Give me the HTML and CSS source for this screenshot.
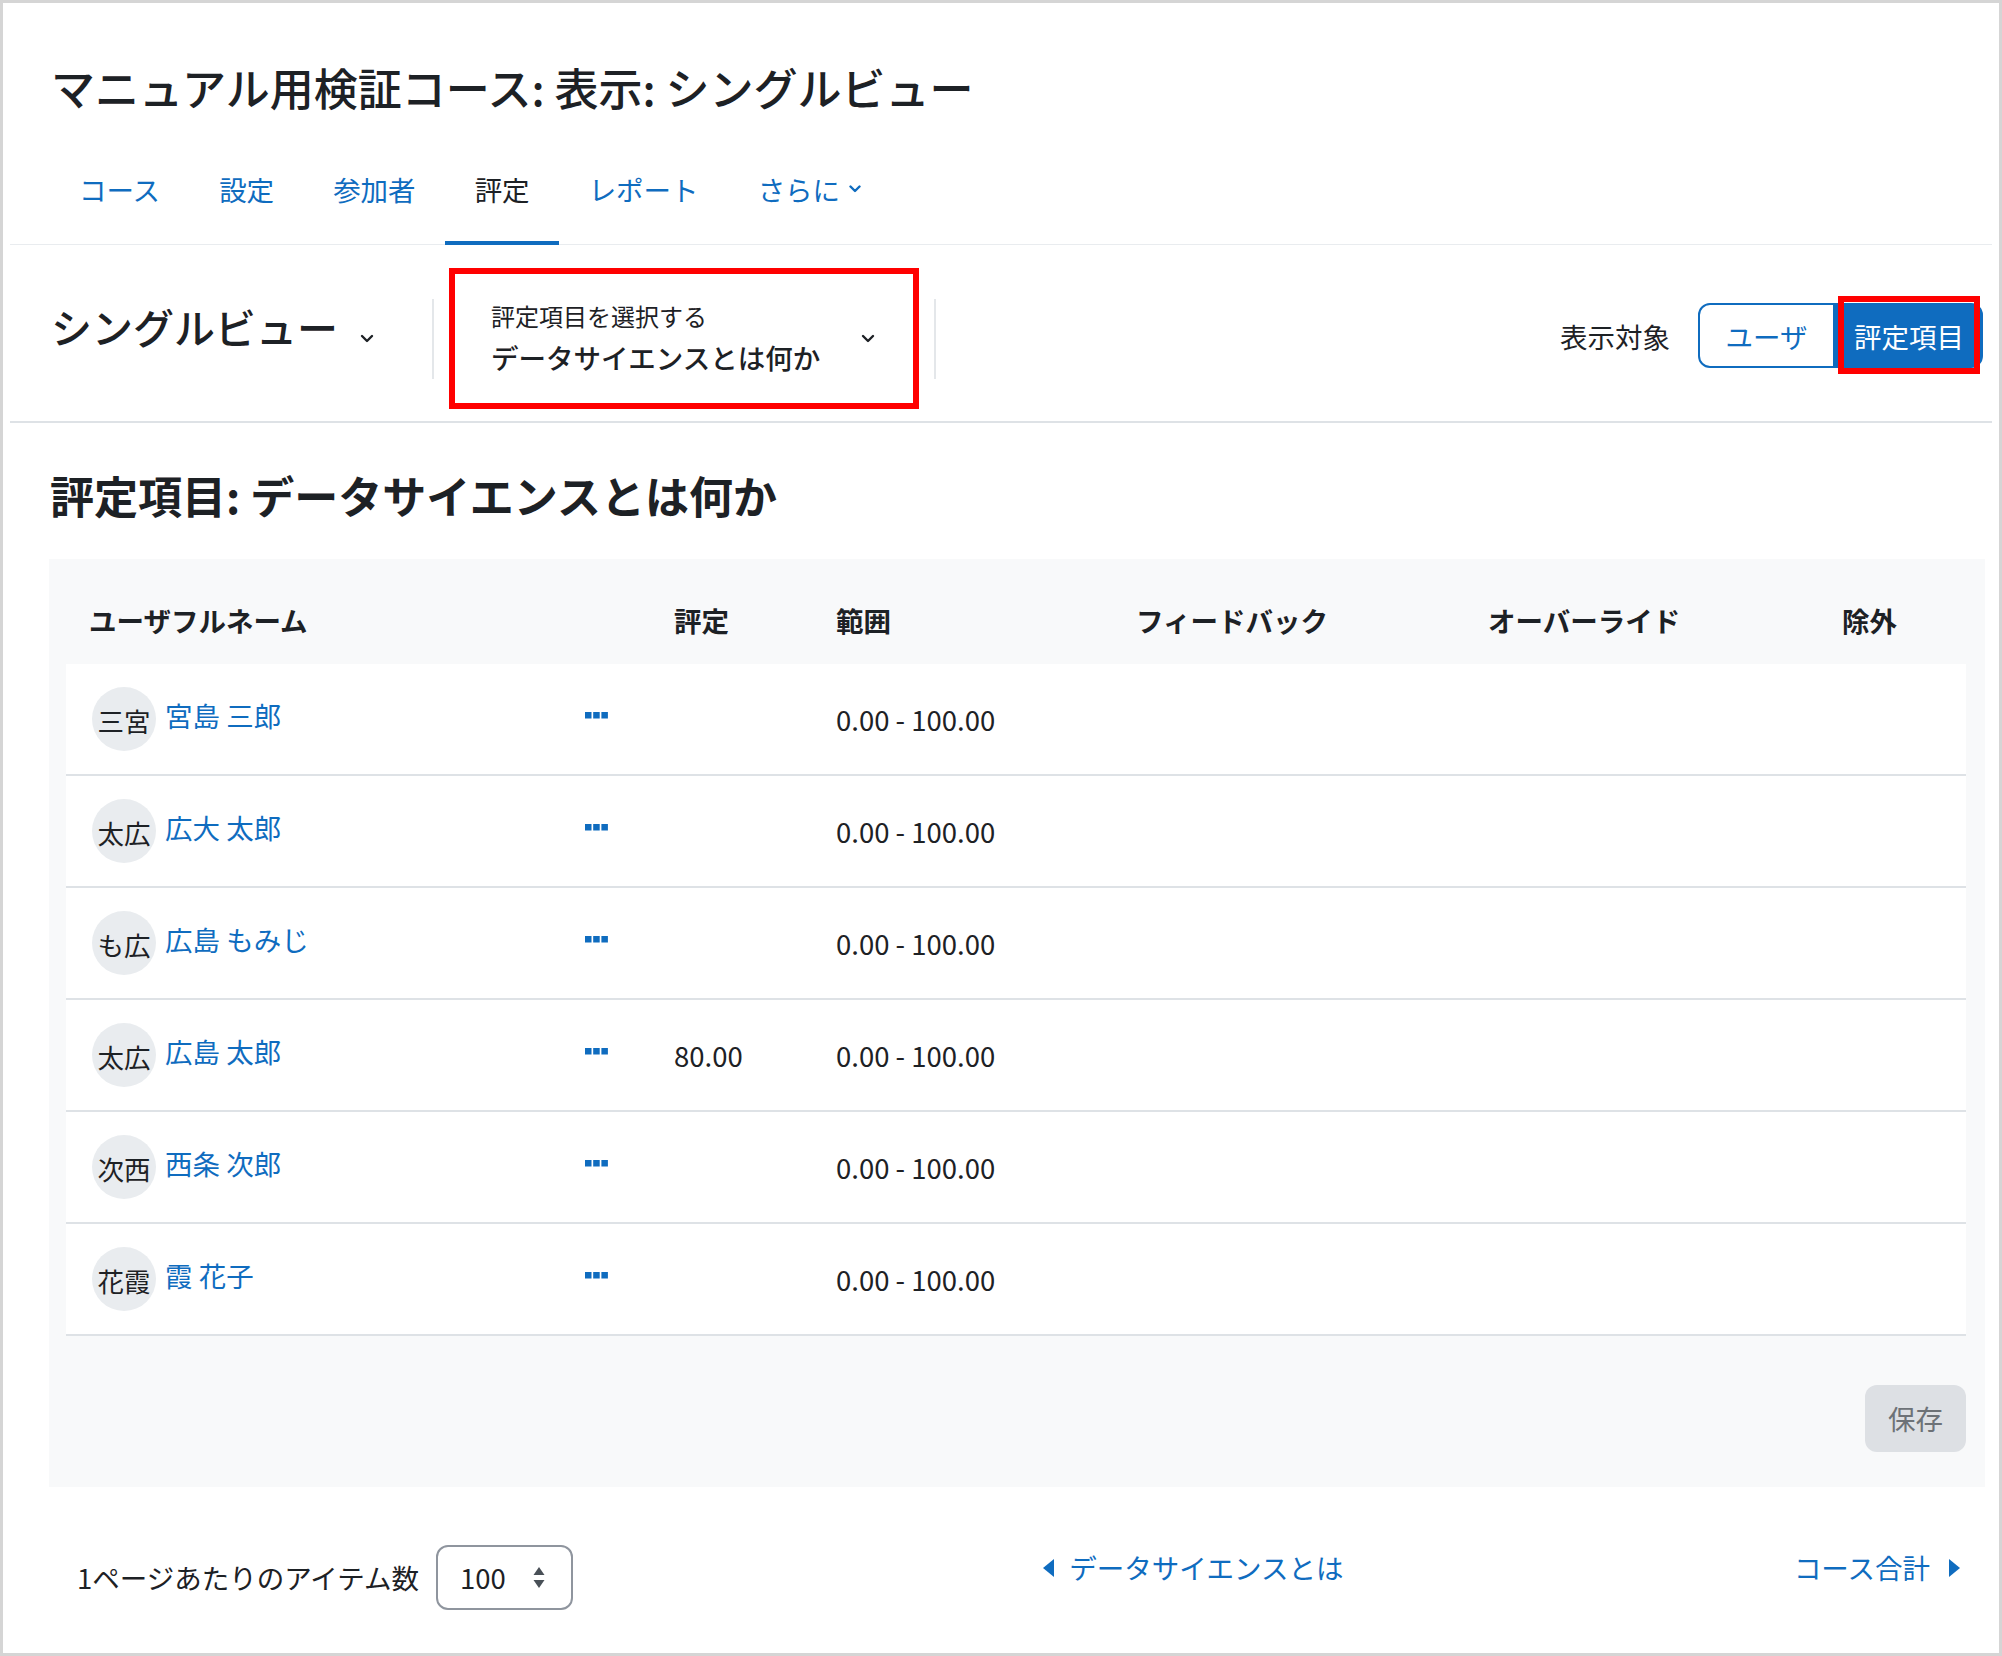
FILE: index.html
```html
<!DOCTYPE html>
<html lang="ja">
<head>
<meta charset="utf-8">
<title>シングルビュー</title>
<link rel="stylesheet" href="styles.css">
</head>
<body>
<div class="frame">
  <header class="page-header">
    <h1 class="page-title">マニュアル用検証コース: 表示: シングルビュー</h1>
  </header>

  <nav class="secondary-nav">
    <ul class="tabs">
      <li class="tab"><a href="#">コース</a></li>
      <li class="tab"><a href="#">設定</a></li>
      <li class="tab"><a href="#">参加者</a></li>
      <li class="tab active"><a href="#">評定</a></li>
      <li class="tab"><a href="#">レポート</a></li>
      <li class="tab"><a href="#">さらに<svg class="chev-tab" viewBox="0 0 12 8"><polyline points="1.5,1.5 6,6 10.5,1.5"/></svg></a></li>
    </ul>
  </nav>

  <div class="tertiary">
    <div class="view-select">
      <h2 class="view-title">シングルビュー</h2>
      <svg class="chev" viewBox="0 0 14 9"><polyline points="2,2 7,7 12,2"/></svg>
    </div>
    <span class="vsep"></span>
    <div class="item-select">
      <div class="item-text">
        <div class="item-label">評定項目を選択する</div>
        <div class="item-value">データサイエンスとは何か</div>
      </div>
      <svg class="chev" viewBox="0 0 14 9"><polyline points="2,2 7,7 12,2"/></svg>
    </div>
    <span class="vsep"></span>
    <div class="spacer"></div>
    <div class="view-toggle">
      <span class="toggle-label">表示対象</span>
      <div class="btn-group">
        <button class="btn btn-outline">ユーザ</button>
        <button class="btn btn-primary">評定項目<span class="annot"></span></button>
      </div>
    </div>
  </div>

  <main class="content">
    <h3 class="item-heading">評定項目: データサイエンスとは何か</h3>

    <section class="panel">
      <div class="grade-table">
        <div class="trow thead">
          <div>ユーザフルネーム</div>
          <div></div>
          <div>評定</div>
          <div>範囲</div>
          <div>フィードバック</div>
          <div>オーバーライド</div>
          <div>除外</div>
        </div>
        <div class="tbody">
          <div class="trow">
            <div class="user"><span class="avatar">三宮</span><a class="uname" href="#">宮島 三郎</a></div>
            <div><svg class="dots" viewBox="0 0 23 7"><rect x="0" y="0" width="6.5" height="6.5"/><rect x="8.2" y="0" width="6.5" height="6.5"/><rect x="16.4" y="0" width="6.5" height="6.5"/></svg></div>
            <div></div>
            <div>0.00 - 100.00</div>
            <div></div><div></div><div></div>
          </div>
          <div class="trow">
            <div class="user"><span class="avatar">太広</span><a class="uname" href="#">広大 太郎</a></div>
            <div><svg class="dots" viewBox="0 0 23 7"><rect x="0" y="0" width="6.5" height="6.5"/><rect x="8.2" y="0" width="6.5" height="6.5"/><rect x="16.4" y="0" width="6.5" height="6.5"/></svg></div>
            <div></div>
            <div>0.00 - 100.00</div>
            <div></div><div></div><div></div>
          </div>
          <div class="trow">
            <div class="user"><span class="avatar">も広</span><a class="uname" href="#">広島 もみじ</a></div>
            <div><svg class="dots" viewBox="0 0 23 7"><rect x="0" y="0" width="6.5" height="6.5"/><rect x="8.2" y="0" width="6.5" height="6.5"/><rect x="16.4" y="0" width="6.5" height="6.5"/></svg></div>
            <div></div>
            <div>0.00 - 100.00</div>
            <div></div><div></div><div></div>
          </div>
          <div class="trow">
            <div class="user"><span class="avatar">太広</span><a class="uname" href="#">広島 太郎</a></div>
            <div><svg class="dots" viewBox="0 0 23 7"><rect x="0" y="0" width="6.5" height="6.5"/><rect x="8.2" y="0" width="6.5" height="6.5"/><rect x="16.4" y="0" width="6.5" height="6.5"/></svg></div>
            <div>80.00</div>
            <div>0.00 - 100.00</div>
            <div></div><div></div><div></div>
          </div>
          <div class="trow">
            <div class="user"><span class="avatar">次西</span><a class="uname" href="#">西条 次郎</a></div>
            <div><svg class="dots" viewBox="0 0 23 7"><rect x="0" y="0" width="6.5" height="6.5"/><rect x="8.2" y="0" width="6.5" height="6.5"/><rect x="16.4" y="0" width="6.5" height="6.5"/></svg></div>
            <div></div>
            <div>0.00 - 100.00</div>
            <div></div><div></div><div></div>
          </div>
          <div class="trow">
            <div class="user"><span class="avatar">花霞</span><a class="uname" href="#">霞 花子</a></div>
            <div><svg class="dots" viewBox="0 0 23 7"><rect x="0" y="0" width="6.5" height="6.5"/><rect x="8.2" y="0" width="6.5" height="6.5"/><rect x="16.4" y="0" width="6.5" height="6.5"/></svg></div>
            <div></div>
            <div>0.00 - 100.00</div>
            <div></div><div></div><div></div>
          </div>
        </div>
      </div>
      <div class="panel-actions">
        <button class="btn-save" disabled>保存</button>
      </div>
    </section>

    <footer class="pager">
      <div class="perpage">
        <span>1ページあたりのアイテム数</span>
        <div class="select">
          <span>100</span>
          <svg class="updown" viewBox="0 0 12 22"><polygon points="6,0 11.5,8 0.5,8"/><polygon points="0.5,13 11.5,13 6,21"/></svg>
        </div>
      </div>
      <a class="pager-link prev" href="#"><svg class="tri" viewBox="0 0 11 18"><polygon points="11,0 0,9 11,18"/></svg><span>データサイエンスとは</span></a>
      <a class="pager-link next" href="#"><span>コース合計</span><svg class="tri" viewBox="0 0 11 18"><polygon points="0,0 11,9 0,18"/></svg></a>
    </footer>
  </main>
</div>
</body>
</html>
```

FILE: styles.css
```css
* {
  box-sizing: border-box;
  margin: 0;
  padding: 0;
}

html, body {
  background: #ffffff;
}

body {
  margin: 0;
  font-family: "Noto Sans CJK JP", "Noto Sans", sans-serif;
  font-size: 27.5px;
  line-height: 1.4;
  color: #1d2125;
}

a {
  color: #0f6cbf;
  text-decoration: none;
}

.frame {
  width: 2002px;
  height: 1656px;
  border: 3px solid #d5d5d5;
  padding: 0 7px;
  overflow: hidden;
}

/* Header */
.page-header {
  padding: 57px 0 0 41px;
}

.page-title {
  font-size: 44px;
  font-weight: 500;
  line-height: 54px;
}

/* Secondary navigation */
.secondary-nav {
  margin-top: 39px;
  border-bottom: 1px solid #e9ecef;
}

.tabs {
  list-style: none;
  display: flex;
  padding-left: 39.5px;
  margin-bottom: -1px;
}

.tab a {
  display: flex;
  align-items: center;
  gap: 9px;
  padding: 16px 29.5px 32px;
  line-height: 40px;
  color: #0f6cbf;
  border-bottom: 4px solid transparent;
}

.tab.active a {
  color: #1d2125;
  border-bottom-color: #0f6cbf;
}

.chev-tab {
  width: 12px;
  height: 8px;
  fill: none;
  stroke: #0f6cbf;
  stroke-width: 2.4;
  stroke-linecap: round;
  stroke-linejoin: round;
}

/* Tertiary navigation */
.tertiary {
  display: flex;
  align-items: center;
  padding: 23px 9px 12px 41px;
  border-bottom: 2px solid #dee2e6;
}

.view-select {
  display: flex;
  align-items: center;
  gap: 22px;
  margin-right: 58px;
}

.view-title {
  font-size: 41px;
  font-weight: 500;
  line-height: 56px;
  margin-bottom: 26px;
}

.chev {
  width: 14px;
  height: 9px;
  fill: none;
  stroke: #1d2125;
  stroke-width: 2.4;
  stroke-linecap: round;
  stroke-linejoin: round;
}

.vsep {
  width: 2px;
  height: 80px;
  background: #e4e7ea;
}

.item-select {
  width: 470px;
  height: 141px;
  margin: 0 15px;
  border: 6px solid #ff0000;
  display: flex;
  align-items: center;
  padding: 0 38px 0 36px;
}

.item-text {
  flex: 1;
  display: flex;
  flex-direction: column;
  gap: 6px;
}

.item-label {
  font-size: 24px;
  line-height: 30px;
}

.item-value {
  font-size: 27.5px;
  font-weight: 500;
  line-height: 40px;
}

.spacer {
  flex: 1;
}

.view-toggle {
  display: flex;
  align-items: center;
  gap: 28px;
  margin-bottom: 6px;
}

.toggle-label {
  line-height: 40px;
}

.btn-group {
  display: flex;
}

.btn {
  font: inherit;
  font-size: 27.5px;
  height: 65px;
  line-height: 40px;
  display: flex;
  align-items: center;
  justify-content: center;
  cursor: pointer;
}

.btn-outline {
  width: 137px;
  background: #ffffff;
  color: #0f6cbf;
  border: 2px solid #0f6cbf;
  border-radius: 12px 0 0 12px;
}

.btn-primary {
  position: relative;
  width: 148px;
  background: #0f6cbf;
  color: #ffffff;
  border: 2px solid #0f6cbf;
  border-radius: 0 12px 12px 0;
}

.annot {
  position: absolute;
  top: -9px;
  bottom: -8px;
  left: 1px;
  right: 1px;
  border: 6px solid #ff0000;
}

/* Content */
.content {
  padding: 0 7px 0 39px;
}

.item-heading {
  font-size: 44px;
  font-weight: 700;
  line-height: 54px;
  margin: 45px 0 37px 1px;
}

.panel {
  background: #f8f9fa;
  padding: 17px 19px 35px 17px;
}

.trow {
  display: grid;
  grid-template-columns: 496px 89px 162px 300px 352px 354px 1fr;
  align-items: center;
  padding-left: 23px;
}

.thead {
  height: 88px;
  font-weight: 700;
}

.tbody .trow {
  height: 112px;
  background: #ffffff;
  border-bottom: 2px solid #dee2e6;
}

.user {
  display: flex;
  align-items: center;
  gap: 9px;
  margin-left: 3px;
}

.avatar {
  width: 64px;
  height: 64px;
  border-radius: 50%;
  background: #e9ecef;
  display: flex;
  align-items: center;
  justify-content: center;
  font-size: 26.5px;
  white-space: nowrap;
  padding-top: 4px;
}

.uname {
  padding-bottom: 8px;
}

.dots {
  display: block;
  width: 23px;
  height: 7px;
  fill: #0f6cbf;
  margin-top: -7px;
}

.panel-actions {
  display: flex;
  justify-content: flex-end;
  margin-top: 49px;
}

.btn-save {
  width: 101px;
  height: 67px;
  border: 0;
  border-radius: 12px;
  background: #dde0e4;
  color: #6d7277;
  font: inherit;
  font-size: 27.5px;
}

/* Footer pager */
.pager {
  display: flex;
  justify-content: space-between;
  align-items: flex-start;
  padding: 58px 25px 0 28px;
}

.perpage {
  display: flex;
  align-items: center;
  gap: 17px;
  height: 65px;
}

.select {
  width: 137px;
  height: 65px;
  border: 2px solid #8f959e;
  border-radius: 12px;
  display: flex;
  align-items: center;
  justify-content: space-between;
  padding: 0 26px 0 22px;
}

.updown {
  width: 12px;
  height: 22px;
  fill: #495057;
}

.pager-link {
  display: flex;
  align-items: center;
  gap: 15px;
  height: 45px;
  line-height: 45px;
}

.pager-link.prev {
  margin-left: 20px;
}

.pager-link.next {
  gap: 19px;
}

.tri {
  width: 11px;
  height: 18px;
  fill: #0f6cbf;
}
```
